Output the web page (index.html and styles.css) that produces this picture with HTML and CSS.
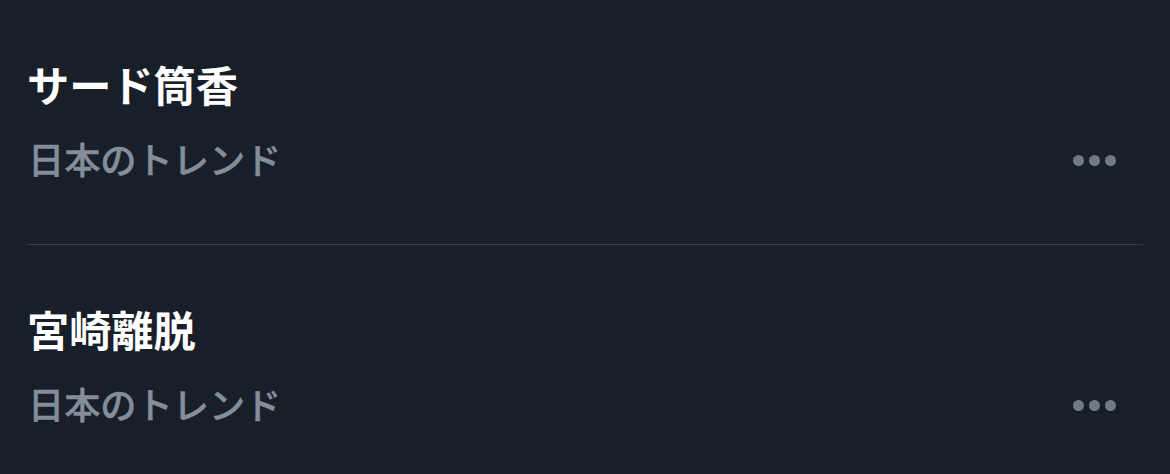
FILE: index.html
```html
<!DOCTYPE html>
<html lang="ja">
<head>
<meta charset="utf-8">
<link rel="stylesheet" href="styles.css">
</head>
<body>
<div class="list">
  <div class="item">
    <div class="title">サード筒香</div>
    <div class="meta">
      <span class="sub">日本のトレンド</span>
      <span class="more"><i></i><i></i><i></i></span>
    </div>
  </div>
  <div class="item">
    <div class="title">宮崎離脱</div>
    <div class="meta">
      <span class="sub">日本のトレンド</span>
      <span class="more"><i></i><i></i><i></i></span>
    </div>
  </div>
</div>
</body>
</html>
```
FILE: styles.css
```css
html, body {
  margin: 0;
  padding: 0;
  background: #191f29;
  height: 100%;
  overflow: hidden;
}
body {
  font-family: "Noto Sans CJK JP", "Noto Sans", sans-serif;
}
.list {
  padding: 0 27px;
}
.item {
  padding: 58px 0 62px;
  border-bottom: 1px solid #363c47;
}
.item:last-child {
  border-bottom: none;
}
.title {
  font-size: 42.2px;
  line-height: 52px;
  font-weight: 700;
  color: #ffffff;
}
.meta {
  margin-top: 24px;
  display: flex;
  align-items: center;
  justify-content: space-between;
  height: 48px;
}
.sub {
  font-size: 36.2px;
  line-height: 48px;
  font-weight: 500;
  color: #838e9a;
  -webkit-text-stroke: 0.45px #838e9a;
  padding-left: 1px;
}
.more {
  display: flex;
  gap: 5px;
  margin-right: 27px;
  margin-top: 4px;
}
.more i {
  display: block;
  width: 11px;
  height: 11px;
  border-radius: 50%;
  background: #6f7b89;
}
```
